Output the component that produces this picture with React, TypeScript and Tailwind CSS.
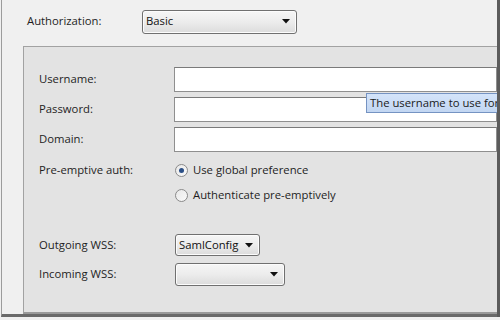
import React from 'react';

const font = { fontFamily: '"Open Sans", "Noto Sans", "Liberation Sans", sans-serif' };

function Arrow() {
  return (
    <svg width="8" height="5" viewBox="0 0 8 5" className="shrink-0">
      <polygon points="0,0 8,0 4,4.5" fill="#111" />
    </svg>
  );
}

function DropDown({ value, width, height }: { value?: string; width: string; height: string }) {
  return (
    <div
      className={`${width} ${height} flex items-center justify-between pl-[3px] pr-[6px] rounded-[3px] border border-[#707070] bg-gradient-to-b from-[#f6f6f6] via-[#ececec] to-[#dcdcdc] shadow-[inset_0_0_0_1px_#fcfcfc] text-[#111]`}
    >
      <span>{value}</span>
      <Arrow />
    </div>
  );
}

function TextInput() {
  return <div className="h-[25px] flex-1 bg-white border border-[#8f8f8f] border-t-[#7a7a7a]" />;
}

function Radio({ checked, label }: { checked?: boolean; label: string }) {
  return (
    <div className="flex items-center gap-[5px] h-[25px]">
      <span className="w-[13px] h-[13px] rounded-full border border-[#8a8a8a] bg-gradient-to-br from-[#e8e8e8] to-[#fafafa] flex items-center justify-center">
        {checked && <span className="w-[5px] h-[5px] rounded-full bg-[#2b4f86]" />}
      </span>
      <span>{label}</span>
    </div>
  );
}

export default function App() {
  return (
    <div className="w-[500px] h-[320px] bg-[#f0f0f0] relative overflow-hidden text-[11.3px] text-[#1e1e1e]" style={font}>
      {/* outer frame */}
      <div className="ml-[1px] w-[499px] h-[317px] border-l border-[#9c9c9c] border-r-[3px] border-r-[#5c5c5c] border-b-[3px] border-b-[#6a6a6a] flex flex-col">
        {/* Authorization row */}
        <div className="flex items-center h-[46px] pl-[25px] pb-[3px]">
          <span className="w-[115px]">Authorization:</span>
          <DropDown value="Basic" width="w-[155px]" height="h-[24px]" />
        </div>

        {/* inner panel */}
        <div className="ml-[21px] flex-1 bg-[#e3e3e3] border border-r-0 border-[#a2a2a2] border-b-2 border-b-[#9a9a9a] pl-[15px] pt-[20px] flex flex-col">
          <div className="flex items-center">
            <span className="w-[135px]">Username:</span>
            <TextInput />
          </div>
          <div className="flex items-center mt-[5px]">
            <span className="w-[135px]">Password:</span>
            <TextInput />
          </div>
          <div className="flex items-center mt-[5px]">
            <span className="w-[135px]">Domain:</span>
            <TextInput />
          </div>
          <div className="flex mt-[6px]">
            <span className="w-[136px] h-[25px] flex items-center">Pre-emptive auth:</span>
            <div className="flex flex-col">
              <Radio checked label="Use global preference" />
              <Radio label="Authenticate pre-emptively" />
            </div>
          </div>
          <div className="flex items-center mt-[26px]">
            <span className="w-[136px]">Outgoing WSS:</span>
            <DropDown value="SamlConfig" width="w-[85px]" height="h-[22px]" />
          </div>
          <div className="flex items-center mt-[7px]">
            <span className="w-[136px]">Incoming WSS:</span>
            <DropDown width="w-[110px]" height="h-[23px]" />
          </div>
        </div>
      </div>

      {/* tooltip */}
      <div className="absolute left-[366px] top-[93px] h-[20px] pl-[3px] pr-[2px] flex items-center whitespace-nowrap bg-gradient-to-b from-[#d4e4fa] to-[#c2d6f2] border border-[#7593c2] text-[#1a1a1a]">
        The username to use for authentication
      </div>
      {/* right edge covers overflowing tooltip */}
      <div className="absolute right-0 top-0 w-[3px] h-[317px] bg-[#5c5c5c]" />
    </div>
  );
}
